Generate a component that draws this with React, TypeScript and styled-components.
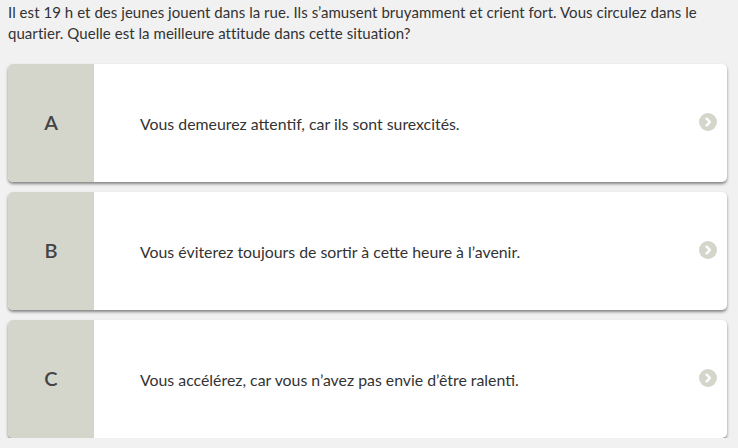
import React from 'react';
import styled, { createGlobalStyle } from 'styled-components';

const Global = createGlobalStyle`
  html, body { margin: 0; padding: 0; background: #f1f1f1; }
  body { font-family: Lato, "Open Sans", sans-serif; color: #333; }
`;

const Page = styled.div`
  padding: 2px 8px 0;
`;

const Question = styled.p`
  margin: 0 0 20px;
  font-size: 15px;
  line-height: 21px;
  letter-spacing: 0.05px;
  color: #333;
`;

const List = styled.div`
  display: flex; flex-direction: column; gap: 10px;
  padding-right: 3px;
`;

const Card = styled.div`
  display: flex; align-items: stretch;
  height: 118px;
  background: #fff;
  border-radius: 5px;
  overflow: hidden;
  box-shadow: 0 2px 3px rgba(0,0,0,0.45);
  cursor: pointer;
`;

const Letter = styled.div`
  flex: 0 0 86px;
  background: #d4d6cc;
  display: flex; align-items: center; justify-content: center;
  padding-bottom: 3px;
  font-size: 20px;
  font-weight: 600;
  color: #444;
`;

const Label = styled.div`
  flex: 1;
  display: flex; align-items: center;
  padding-left: 46px;
  font-size: 15.85px;
  color: #333;
`;

const Arrow = styled.div`
  flex: 0 0 auto;
  display: flex; align-items: center;
  padding: 0 10px 2px 0;
`;

const Chevron = () => (
  <svg width="18" height="18" viewBox="0 0 18 18">
    <circle cx="9" cy="9" r="9" fill="#d4d6cc" />
    <path d="M7.6 5.6 L11 9 L7.6 12.4" stroke="#fff" strokeWidth="2.4" fill="none" strokeLinecap="round" strokeLinejoin="round" />
  </svg>
);

const options = [
  { key: 'A', text: 'Vous demeurez attentif, car ils sont surexcités.' },
  { key: 'B', text: 'Vous éviterez toujours de sortir à cette heure à l’avenir.' },
  { key: 'C', text: 'Vous accélérez, car vous n’avez pas envie d’être ralenti.' },
];

export default function App() {
  return (
    <Page>
      <Global />
      <Question>
        Il est 19 h et des jeunes jouent dans la rue. Ils s’amusent bruyamment et crient fort. Vous circulez dans le quartier. Quelle est la meilleure attitude dans cette situation?
      </Question>
      <List>
        {options.map(o => (
          <Card key={o.key}>
            <Letter>{o.key}</Letter>
            <Label>{o.text}</Label>
            <Arrow><Chevron /></Arrow>
          </Card>
        ))}
      </List>
    </Page>
  );
}
